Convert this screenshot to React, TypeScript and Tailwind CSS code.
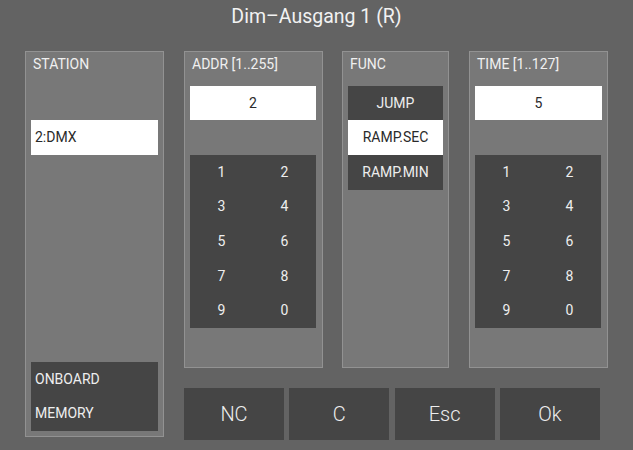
import React from "react";

const digits = ["1", "2", "3", "4", "5", "6", "7", "8", "9", "0"];

function Keypad() {
  return (
    <div className="grid h-[173px] w-[126px] grid-cols-2 grid-rows-5 bg-[#454545] text-[14px] text-[#eeeeee]">
      {digits.map((d) => (
        <div key={d} className="flex items-center justify-center">
          {d}
        </div>
      ))}
    </div>
  );
}

function Panel({ label, width, height, children }: { label: string; width: string; height: string; children?: React.ReactNode }) {
  return (
    <div className={`flex flex-col border border-[#929292] bg-[#787878] ${width} ${height}`}>
      <div className="mt-[4px] pl-[7px] text-[14px] leading-[16px] text-[#f0f0f0]">{label}</div>
      {children}
    </div>
  );
}

export default function App() {
  return (
    <div className="h-[450px] w-[633px] overflow-hidden bg-[#636363] font-['Roboto',sans-serif] text-white">
      <div className="h-[51px] text-center text-[19.5px] leading-[34px] text-[#f2f2f2]">Dim–Ausgang 1 (R)</div>

      <div className="flex pl-[25px]">
        <Panel label="STATION" width="w-[139px]" height="h-[386px]">
          <div className="mx-[5px] mt-[48px] flex h-[35px] w-[127px] items-center bg-white pl-[4px] text-[14px] text-[#2a2a2a]">
            2:DMX
          </div>
          <div className="mx-[5px] mb-[5px] mt-auto flex h-[69px] w-[127px] flex-col bg-[#454545] pl-[4px] text-[14px] text-[#eeeeee]">
            <div className="flex h-[34px] items-center">ONBOARD</div>
            <div className="flex h-[35px] items-center">MEMORY</div>
          </div>
        </Panel>

        <div className="ml-[20px] flex flex-col">
          <div className="flex h-[317px]">
            <Panel label="ADDR [1..255]" width="w-[139px]" height="h-[317px]">
              <div className="mx-[5px] mt-[14px] flex h-[34px] w-[126px] items-center justify-center bg-white text-[14px] text-[#2a2a2a]">
                2
              </div>
              <div className="mx-[5px] mt-[35px]">
                <Keypad />
              </div>
            </Panel>

            <div className="ml-[19px]">
              <Panel label="FUNC" width="w-[107px]" height="h-[317px]">
                <div className="mx-[5px] mt-[14px] flex w-[95px] flex-col text-[14px]">
                  <div className="flex h-[34px] items-center justify-center bg-[#454545] text-[#eeeeee]">JUMP</div>
                  <div className="flex h-[35px] items-center justify-center bg-white text-[#2a2a2a]">RAMP.SEC</div>
                  <div className="flex h-[35px] items-center justify-center bg-[#454545] text-[#eeeeee]">RAMP.MIN</div>
                </div>
              </Panel>
            </div>

            <div className="ml-[20px]">
              <Panel label="TIME [1..127]" width="w-[139px]" height="h-[317px]">
                <div className="mx-[5px] mt-[14px] flex h-[34px] w-[127px] items-center justify-center bg-white text-[14px] text-[#2a2a2a]">
                  5
                </div>
                <div className="mx-[5px] mt-[35px]">
                  <Keypad />
                </div>
              </Panel>
            </div>
          </div>

          <div className="mt-[20px] grid h-[52px] w-[416px] grid-cols-4 gap-[5.33px] text-[20px] font-light text-[#eeeeee]">
            {["NC", "C", "Esc", "Ok"].map((b) => (
              <div key={b} className="flex items-center justify-center bg-[#454545]">
                {b}
              </div>
            ))}
          </div>
        </div>
      </div>
    </div>
  );
}
